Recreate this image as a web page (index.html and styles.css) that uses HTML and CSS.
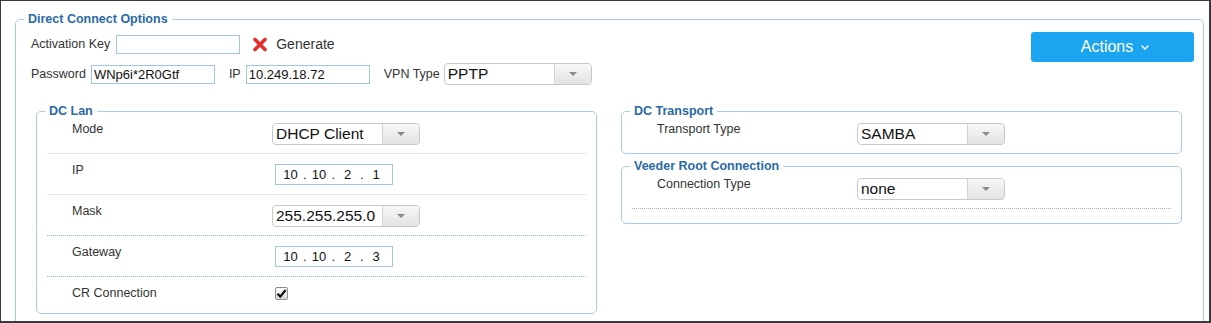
FILE: index.html
```html
<!DOCTYPE html>
<html lang="en">
<head>
  <meta charset="UTF-8">
  <title>Direct Connect Options</title>
  <link rel="stylesheet" href="styles.css">
</head>
<body>
  <div class="frame">
    <fieldset class="group outer">
      <legend>Direct Connect Options</legend>

      <div class="top">
        <div class="top-fields">
          <div class="line">
            <label class="lbl">Activation Key</label>
            <input class="text key" type="text" value="">
            <span class="gen-x">
              <svg width="16" height="15" viewBox="0 0 16 15"><path d="M3 2.5 L13 12.5 M13 2.5 L3 12.5" stroke="#e2302d" stroke-width="3.6" stroke-linecap="round"/></svg>
            </span>
            <span class="gen">Generate</span>
          </div>
          <div class="line">
            <label class="lbl">Password</label>
            <input class="text pw" type="text" value="WNp6i*2R0Gtf">
            <label class="lbl ip-lbl">IP</label>
            <input class="text ip" type="text" value="10.249.18.72">
            <label class="lbl vpn-lbl">VPN Type</label>
            <div class="select"><span class="val">PPTP</span><span class="arrow"></span></div>
          </div>
        </div>
        <button class="actions">Actions
          <svg width="10" height="7" viewBox="0 0 10 7"><polyline points="1.5,1.5 5,5 8.5,1.5" fill="none" stroke="#fff" stroke-width="1.4"/></svg>
        </button>
      </div>

      <div class="columns">
        <div class="col">
          <fieldset class="group">
            <legend>DC Lan</legend>
            <div class="rows">
              <div class="row">
                <span class="row-lbl">Mode</span>
                <div class="select"><span class="val">DHCP Client</span><span class="arrow"></span></div>
              </div>
              <div class="row">
                <span class="row-lbl">IP</span>
                <div class="ipbox"><span>10</span><i>.</i><span>10</span><i>.</i><span>2</span><i>.</i><span>1</span></div>
              </div>
              <div class="row dotted">
                <span class="row-lbl">Mask</span>
                <div class="select"><span class="val">255.255.255.0</span><span class="arrow"></span></div>
              </div>
              <div class="row dotted">
                <span class="row-lbl">Gateway</span>
                <div class="ipbox"><span>10</span><i>.</i><span>10</span><i>.</i><span>2</span><i>.</i><span>3</span></div>
              </div>
              <div class="row last">
                <span class="row-lbl">CR Connection</span>
                <span class="check">
                  <svg width="11" height="11" viewBox="0 0 11 11"><path d="M1.5 5.8 L4.3 8.6 L9.6 2" fill="none" stroke="#111" stroke-width="2.2"/></svg>
                </span>
              </div>
            </div>
          </fieldset>
          <fieldset class="group next">
            <legend>DC Wan</legend>
            <div class="rows">
              <div class="row">
                <span class="row-lbl">Mode</span>
              </div>
            </div>
          </fieldset>
        </div>

        <div class="col">
          <fieldset class="group">
            <legend>DC Transport</legend>
            <div class="rows">
              <div class="row last">
                <span class="row-lbl">Transport Type</span>
                <div class="select"><span class="val">SAMBA</span><span class="arrow"></span></div>
              </div>
            </div>
          </fieldset>
          <fieldset class="group next">
            <legend>Veeder Root Connection</legend>
            <div class="rows tail">
              <div class="row dotted">
                <span class="row-lbl">Connection Type</span>
                <div class="select"><span class="val">none</span><span class="arrow"></span></div>
              </div>
            </div>
          </fieldset>
        </div>
      </div>
    </fieldset>
  </div>
</body>
</html>
```

FILE: styles.css
```css
:root {
  --group-border: #a9cbe6;
  --legend: #2a6aa6;
  --label: #333333;
  --input-border: #9fc6e7;
}

html, body {
  margin: 0;
  height: 100%;
}

body {
  font-family: "Liberation Sans", Arial, sans-serif;
  color: var(--label);
  background: #ffffff;
}

.frame {
  height: 100vh;
  box-sizing: border-box;
  border-style: solid;
  border-color: #3a3a3a;
  border-width: 1px 2px 2px 1px;
  overflow: hidden;
}

fieldset.group {
  border: 1px solid var(--group-border);
  border-radius: 5px;
  margin: 0;
  padding: 0 10px;
  min-width: 0;
}

/* legend sits at the content edge, so pull it back over the padding */
fieldset.group > legend {
  margin-left: -2px;
  padding: 0 4px;
  font-size: 12.5px;
  font-weight: bold;
  line-height: 14px;
  color: var(--legend);
}

fieldset.outer {
  margin: 11px 5px 0 14px;
  padding: 0 9px 40px 15px;
}

fieldset.outer > legend {
  margin-left: -7px;
}

/* top area */
.top {
  display: flex;
  justify-content: space-between;
  align-items: flex-start;
  padding-top: 3px;
}

.line {
  display: flex;
  align-items: center;
  height: 30px;
}

.lbl {
  font-size: 12.5px;
}

.text {
  height: 19px;
  width: 124px;
  box-sizing: border-box;
  border: 1px solid var(--input-border);
  padding: 0 2px;
  margin: 0;
  font-family: inherit;
  font-size: 13px;
  color: #111;
  outline: none;
}

.key { margin-left: 6px; }
.pw { margin-left: 5px; }
.ip-lbl { margin-left: 14px; }
.ip { margin-left: 5px; }
.vpn-lbl { margin-left: 14px; }
.line .select { margin-left: 4px; }

.gen-x {
  display: flex;
  margin-left: 12px;
}

.gen {
  margin-left: 8px;
  font-size: 14px;
}

.actions {
  margin-top: 3px;
  width: 163px;
  height: 30px;
  border: none;
  border-radius: 3px;
  background: #1ba4ef;
  color: #ffffff;
  font-family: inherit;
  font-size: 16px;
  display: flex;
  align-items: center;
  justify-content: center;
  gap: 7px;
  padding: 0 0 0 6px;
}

/* select look-alike */
.select {
  display: flex;
  width: 148px;
  height: 22px;
  box-sizing: border-box;
  border: 1px solid #c8c8c8;
  border-radius: 4px;
  overflow: hidden;
  background: #ffffff;
}

.select .val {
  flex: 1;
  padding-left: 3px;
  font-size: 15.5px;
  line-height: 20px;
  color: #111;
  white-space: nowrap;
}

.select .arrow {
  width: 36px;
  border-left: 1px solid #d4d4d4;
  background: linear-gradient(#f7f7f7, #e3e3e3);
  display: flex;
  align-items: center;
  justify-content: center;
}

.select .arrow::after {
  content: "";
  border-left: 4px solid transparent;
  border-right: 4px solid transparent;
  border-top: 4px solid #8a8a8a;
}

/* columns */
.columns {
  display: grid;
  grid-template-columns: 1fr 1fr;
  column-gap: 24px;
  margin-top: 15px;
  padding: 0 12px 0 5px;
}

.col {
  display: flex;
  flex-direction: column;
}

fieldset.next {
  margin-top: 5px;
}

.row {
  display: flex;
  align-items: flex-start;
  height: 41px;
  box-sizing: border-box;
  padding-top: 8px;
  border-bottom: 1px solid #dce9f5;
}

.row:first-child {
  height: 36px;
  padding-top: 3px;
}

.row.dotted {
  border-bottom: 1px dotted #8fbbe2;
}

.row.last {
  border-bottom: none;
  height: 36px;
}

.rows > .row.last:first-child {
  height: 35px;
}

.rows.tail {
  padding-bottom: 14px;
}

.row-lbl {
  width: 200px;
  padding-left: 25px;
  font-size: 12.5px;
  line-height: 16px;
}

.row .select,
.row .ipbox,
.row .check {
  margin-top: 2px;
}

.ipbox {
  width: 118px;
  height: 21px;
  margin-left: 3px;
  box-sizing: border-box;
  border: 1px solid var(--input-border);
  display: flex;
  align-items: center;
  padding-left: 6.5px;
  font-size: 13px;
  color: #111;
}

.ipbox span {
  width: 16px;
  text-align: center;
}

.ipbox i {
  font-style: normal;
  width: 12.5px;
  text-align: center;
}

.check {
  width: 13px;
  height: 13px;
  margin-left: 3px;
  box-sizing: border-box;
  border: 1px solid #8e8e8e;
  border-radius: 2px;
  background: linear-gradient(#fdfdfd, #dcdcdc);
  display: flex;
  align-items: center;
  justify-content: center;
}
```
